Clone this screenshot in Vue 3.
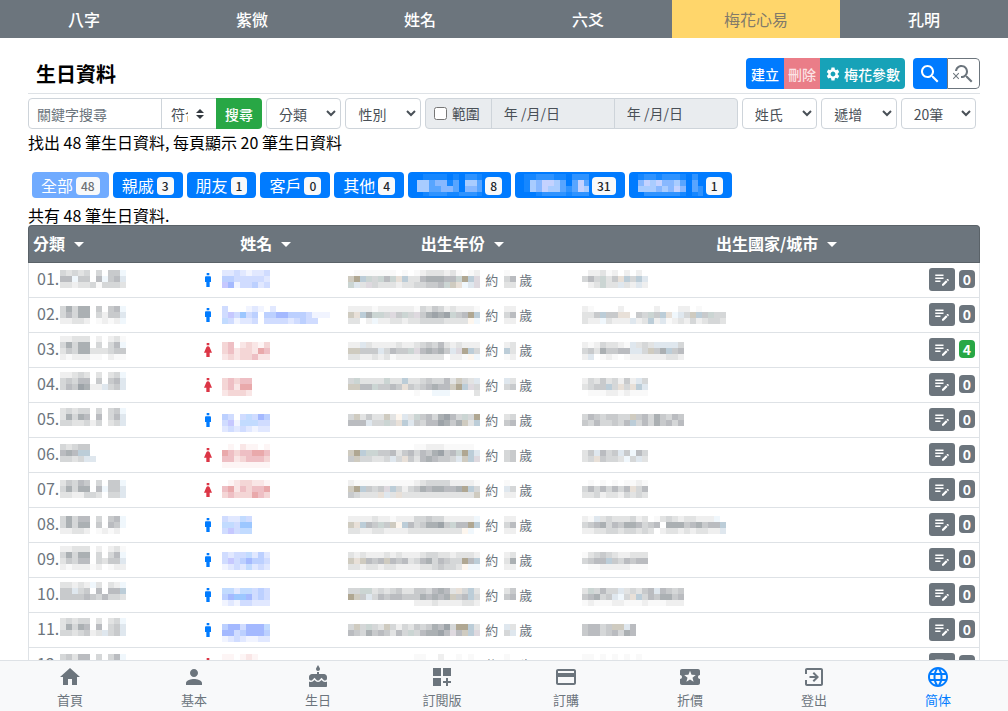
<script setup>
import { h, ref } from 'vue'

const icons = {
  home: 'M10 20v-6h4v6h5v-8h3L12 3 2 12h3v8z',
  person: 'M12 12c2.21 0 4-1.79 4-4s-1.79-4-4-4-4 1.79-4 4 1.79 4 4 4zm0 2c-2.67 0-8 1.34-8 4v2h16v-2c0-2.66-5.33-4-8-4z',
  cake: 'M12 6c1.11 0 2-.9 2-2 0-.38-.1-.73-.29-1.03L12 0l-1.71 2.97c-.19.3-.29.65-.29 1.03 0 1.1.9 2 2 2zm4.6 9.99l-1.07-1.07-1.08 1.07c-1.3 1.3-3.58 1.31-4.89 0l-1.07-1.07-1.09 1.07C6.75 16.64 5.88 17 4.96 17c-.73 0-1.4-.23-1.96-.61V21c0 .55.45 1 1 1h16c.55 0 1-.45 1-1v-4.61c-.56.38-1.23.61-1.96.61-.92 0-1.79-.36-2.44-1.01zM18 9h-5V7h-2v2H6c-1.66 0-3 1.34-3 3v1.54c0 1.08.88 1.96 1.96 1.96.52 0 1.02-.2 1.38-.57l2.14-2.13 2.13 2.13c.74.74 2.03.74 2.77 0l2.14-2.13 2.13 2.13c.37.37.86.57 1.38.57 1.08 0 1.96-.88 1.96-1.96V12C21 10.34 19.66 9 18 9z',
  dashboard: 'M3 3h8v8H3zM13 3h8v8h-8zM3 13h8v8H3zM18 13h-2v3h-3v2h3v3h2v-3h3v-2h-3z',
  card: 'M20 4H4c-1.11 0-1.99.89-1.99 2L2 18c0 1.11.89 2 2 2h16c1.11 0 2-.89 2-2V6c0-1.11-.89-2-2-2zm0 14H4v-6h16v6zm0-10H4V6h16v2z',
  ticket: 'M20 12c0-1.1.9-2 2-2V6c0-1.1-.9-2-2-2H4c-1.1 0-1.99.9-1.99 2v4c1.1 0 1.99.9 1.99 2s-.89 2-2 2v4c0 1.1.9 2 2 2h16c1.1 0 2-.9 2-2v-4c-1.1 0-2-.9-2-2zm-4.42 4.8L12 14.5l-3.58 2.3 1.08-4.12-3.29-2.69 4.24-.25L12 5.8l1.54 3.95 4.24.25-3.29 2.69 1.09 4.11z',
  exit: 'M10.6 15.59L12 17l5-5-5-5-1.4 1.41L13.17 11H7.5v2h5.67zM19 3H5c-1.11 0-2 .9-2 2v4h2V5h14v14H5v-4H3v4c0 1.1.89 2 2 2h14c1.1 0 2-.9 2-2V5c0-1.1-.9-2-2-2z',
  globe: 'M11.99 2C6.47 2 2 6.48 2 12s4.47 10 9.99 10C17.52 22 22 17.52 22 12S17.52 2 11.99 2zm6.93 6h-2.95c-.32-1.25-.78-2.45-1.38-3.56 1.84.63 3.37 1.91 4.33 3.56zM12 4.04c.83 1.2 1.48 2.53 1.91 3.96h-3.82c.43-1.43 1.08-2.76 1.91-3.96zM4.26 14C4.1 13.36 4 12.69 4 12s.1-1.36.26-2h3.38c-.08.66-.14 1.32-.14 2s.06 1.34.14 2H4.26zm.82 2h2.95c.32 1.25.78 2.45 1.38 3.56-1.84-.63-3.37-1.9-4.33-3.56zm2.95-8H5.08c.96-1.66 2.49-2.93 4.33-3.56C8.81 5.55 8.35 6.75 8.03 8zM12 19.96c-.83-1.2-1.48-2.53-1.91-3.96h3.82c-.43 1.43-1.08 2.76-1.91 3.96zM14.34 14H9.66c-.09-.66-.16-1.32-.16-2s.07-1.35.16-2h4.68c.09.65.16 1.32.16 2s-.07 1.34-.16 2zm.25 5.56c.6-1.11 1.06-2.31 1.38-3.56h2.95c-.96 1.65-2.49 2.93-4.33 3.56zM16.36 14c.08-.66.14-1.32.14-2s-.06-1.34-.14-2h3.38c.16.64.26 1.31.26 2s-.1 1.36-.26 2h-3.38z',
  gear: 'M19.14 12.94c.04-.3.06-.61.06-.94 0-.32-.02-.64-.07-.94l2.03-1.58c.18-.14.23-.41.12-.61l-1.92-3.32c-.12-.22-.37-.29-.59-.22l-2.39.96c-.5-.38-1.03-.7-1.62-.94l-.36-2.54c-.04-.24-.24-.41-.48-.41h-3.84c-.24 0-.43.17-.47.41l-.36 2.54c-.59.24-1.13.57-1.62.94l-2.39-.96c-.22-.08-.47 0-.59.22L2.74 8.87c-.12.21-.08.47.12.61l2.03 1.58c-.05.3-.09.63-.09.94s.02.64.07.94l-2.03 1.58c-.18.14-.23.41-.12.61l1.92 3.32c.12.22.37.29.59.22l2.39-.96c.5.38 1.03.7 1.62.94l.36 2.54c.05.24.24.41.48.41h3.84c.24 0 .44-.17.47-.41l.36-2.54c.59-.24 1.13-.56 1.62-.94l2.39.96c.22.08.47 0 .59-.22l1.92-3.32c.12-.22.07-.47-.12-.61l-2.01-1.58zM12 15.6c-1.98 0-3.6-1.62-3.6-3.6s1.62-3.6 3.6-3.6 3.6 1.62 3.6 3.6-1.62 3.6-3.6 3.6z',
  search: 'M15.5 14h-.79l-.28-.27C15.41 12.59 16 11.11 16 9.5 16 5.91 13.09 3 9.5 3S3 5.91 3 9.5 5.91 16 9.5 16c1.61 0 3.09-.59 4.23-1.57l.27.28v.79l5 4.99L20.49 19l-4.99-5zm-6 0C7.01 14 5 11.99 5 9.5S7.01 5 9.5 5 14 7.01 14 9.5 11.99 14 9.5 14z',
  searchOff: 'M15.5 14h-.79l-.28-.27C15.41 12.59 16 11.11 16 9.5 16 5.91 13.09 3 9.5 3 6.08 3 3.28 5.64 3.03 9h2.02C5.3 6.75 7.18 5 9.5 5 11.99 5 14 7.01 14 9.5S11.99 14 9.5 14c-.17 0-.33-.03-.5-.05v2.02c.17.02.33.03.5.03 1.61 0 3.09-.59 4.23-1.57l.27.28v.79l5 4.99L20.49 19zM6.47 10.82L4 13.29l-2.47-2.47-.71.71L3.29 14 .82 16.47l.71.71L4 14.71l2.47 2.47.71-.71L4.71 14l2.47-2.47z',
  note: 'M3 10h11v2H3zM3 8h11V6H3zM3 16h7v-2H3zM18.01 12.87l.71-.71c.39-.39 1.02-.39 1.41 0l.71.71c.39.39.39 1.02 0 1.41l-.71.71zM17.3 13.58l-5.3 5.3V21h2.12l5.3-5.3z',
  man: 'M10 1.500h4v3.500h-4zM15 6.500H9C7.900 6.500 7.500 7.400 7.500 8.500V15h2v7.500h5V15h2V8.500c0-1.100-.400-2-1.500-2z',
  woman: 'M10 1.500h4v3.500h-4zM14.500 8C14 7 13.200 6.500 12 6.500S10 7 9.500 8L6 16h3.500v6.500h5V16H18z',
}

const Icon = (p) =>
  h('svg', { viewBox: '0 0 24 24', width: p.size, height: p.size, fill: 'currentColor', 'aria-hidden': 'true' }, [
    h('path', { d: icons[p.name] }),
  ])
Icon.props = ['name', 'size']

const palettes = {
  gray: {
    1: '#f9f9f9', 2: '#efefef', 3: '#e2e3e3', 4: '#d5d7d8', 5: '#c8cacc', 6: '#babcc0', 7: '#abb0b3', 8: '#9da3a8',
    a: '#fdf6ee', b: '#e8e0d8', c: '#cfcbc0', d: '#b0a792', e: '#f0f7fc', f: '#dfe7ee', g: '#bccdd8', t: '#cbd5d3', p: '#ded9df',
  },
  blue: { 1: '#f1f4ff', 2: '#e1e8ff', 3: '#d0dcff', 4: '#bcd0ff', 5: '#a4b9ff', c: '#c2dbff', d: '#9cc7ff', v: '#c6c8ff' },
  red: { 1: '#fdf5f5', 2: '#f9e6e6', 3: '#f4d6d6', 4: '#eebfc4', 5: '#e9a9ab' },
  label: { 1: '#1687ff', 2: '#2f93ff', 3: '#58a5ff', 4: '#88b8ff', 5: '#a9ccff', 6: '#c4d2ff' },
}

/* Pixelated placeholder for private text: one character per 6px cell. */
const Mosaic = (p) => {
  const y0 = p.dy || 0
  const cells = []
  p.rows.split('/').forEach((row, r) => {
    row.split('').forEach((c, i) => {
      const fill = palettes[p.tone][c]
      if (fill) cells.push(h('rect', { x: i * 6, y: y0 + r * 6, width: 6, height: 6, fill }))
    })
  })
  return h('svg', { width: p.w, height: p.h || 34, 'shape-rendering': 'crispEdges', role: 'img', 'aria-label': '已隱藏' }, cells)
}
Mosaic.props = ['rows', 'tone', 'dy', 'w', 'h']

const sections = ['八字', '紫微', '姓名', '六爻', '梅花心易', '孔明']
const current = ref('梅花心易')

const groups = [
  { name: '全部', n: 48, active: true },
  { name: '親戚', n: 3 },
  { name: '朋友', n: 1 },
  { name: '客戶', n: 0 },
  { name: '其他', n: 4 },
  { hidden: '.1111.1.221/5534413.553/5533443.443/.1222112221', n: 8 },
  { hidden: '1122211.222/1546653.363/15465532365/..122221222', n: 31 },
  { hidden: '12212221.2./46564453.3./55545464.32/.2222221.12', n: 1 },
]

/* c: category, n: name, b: birth date, a: age, p: place; each is [top offset, cell rows]. */
const rows = [
  {
    g: 'm', k: 0,
    c: [7, '43434.4.55e/66e55.6e56f/33233414443'],
    n: [7, '22321223/44333332/v5133423'],
    b: [7, '.1111111.1.12333231.12/cdgt4t6tbg33677766tdgp/tf3p433323344556tcbefp'],
    a: [7, '1./46/33'],
    p: [7, '.22312.2.2./464t35bg4gf/.23t33f32f2'],
  },
  {
    g: 'm', k: 0,
    c: [8, '47477.5.56e/46477.4255f/22332.1212e'],
    n: [8, '3...121.2/3v3d34.44554443111/c31223.333323433'],
    b: [8, '2222122222214354232221/cbg7tt4p5t4p57878t56dg4/33.2e223323344443333ae'],
    a: [8, '22/46/22'],
    p: [8, '21....2.....2...22.1../335g55bb.54t5gbef4cg5t44/322e3222f23g2f1232423443'],
  },
  {
    g: 'f', k: 4,
    c: [3, '22333.2.231/47477.4.46e/35477333455/2122211.211'],
    n: [9, '34.23213/34233254/23233422'],
    b: [9, '22f3222232234546323222/cc555f4655tp67675fpdg4p/3322323122223333.221ae'],
    a: [9, '23/g3/12'],
    p: [9, '21243321f343ffff4/45375566ff4c57g56/2f.121.1222222332'],
  },
  {
    g: 'f', k: 0,
    c: [4, '22343.3.34e/45466.5.56f/4658722f45f'],
    n: [10, '34344/34255/23332'],
    b: [10, '4t3333t33g33454463c43f/cc66t5565b5456766cdgp4/...........1..eee....3'],
    a: [10, 'f3/45'],
    p: [10, '243534252f4/3455g4b4bgf/.1112212111'],
  },
  {
    g: 'm', k: 0,
    c: [5, '34344.4.45e/37476.6.46f/4433424.34f'],
    n: [11, '43e3c354/3v1ccc33/23232122'],
    b: [11, '4c3533c3af3t5647864t4dg/666f44t4bgf54668757c3gp'],
    a: [11, '34/56'],
    p: [11, '46545544c56475465/54644546g46475646'],
  },
  {
    g: 'f', k: 0,
    c: [6, '43455/676gg/4434ff'],
    n: [6, '.1.211.1/54344554/44234443/11111111'],
    b: [6, '...........1122211111./cdgtt5563564657856tdgfp/5c44334f4b53676554fcgp'],
    a: [12, '45/45'],
    p: [12, '35f645f5e64/34b5443e4f3'],
  },
  {
    g: 'f', k: 0,
    c: [7, '35465.4.55e/47477.6e55f/3322443.44f'],
    n: [7, '.1233221/45243445/34333543'],
    b: [7, '2111111111123444422221/cdg545pg42457677667dg4p/54333bf3b333333333333ce'],
    a: [7, '1./f4/22'],
    p: [7, '.1.1.1.1121/46464646b46/33423324343'],
  },
  {
    g: 'm', k: 0,
    c: [8, '47466.4.56e/47477.5.65e/22332.1212.'],
    n: [8, '322c3/cc3dd/3v3cc'],
    b: [8, '222232212224454422222e/cbg65t5cag6457785t66dg4/3322332222333333333ae'],
    a: [8, '22/46/22'],
    p: [8, '21f34333423.1343233222e./4567465776456.777567566g/223344344343.2332323322f'],
  },
  {
    g: 'm', k: 0,
    c: [3, '22333.2.231/47477.4.46e/35466.4355f/2122212.122'],
    n: [9, '3233c242/3v345443/1232c232'],
    b: [9, '3232223232223443323332/cbc656c656346746544d6g4/3323323322223345443aee'],
    a: [9, '23/37/22'],
    p: [9, '13454322333/4566g546566/.1122222111'],
  },
  {
    g: 'm', k: 0,
    c: [4, '33232e3.32e/55f45.6.66g/55556546443'],
    n: [10, 'cc2cc343/45dd5343/12133222'],
    b: [10, '44tt34345335546763b4g3/dc5f4656655576767c56g44/...........22232222332'],
    a: [10, '35/56'],
    p: [10, '3t4644f34356f6545/56745fe4bg4657756/12111221112111222'],
  },
  {
    g: 'm', k: 0,
    c: [5, '34344.3.34e/37476.6.45f/4434523f45f'],
    n: [11, '4553555c/55345554/12321122'],
    b: [11, '4c4t43c42435457684ddg3f/6547565364t467786p6cgp'],
    a: [11, 'f3/4f'],
    p: [11, '56645ccf6/566456476'],
  },
  {
    g: 'f', k: 0,
    c: [6, '45366.4.46e/33344.3.33e'],
    n: [6, '11.121/2223'],
    b: [6, '...........11..2..1.1.'],
    a: [6, '1.'],
    p: [6, '11.1.1.1.1/22222222'],
  },
].map((r, i) => ({ ...r, no: String(i + 1).padStart(2, '0') + '.' }))

const columns = ['分類', '姓名', '出生年份', '出生國家/城市']

const tabs = [
  ['home', '首頁'],
  ['person', '基本'],
  ['cake', '生日'],
  ['dashboard', '訂閱版'],
  ['card', '訂購'],
  ['ticket', '折價'],
  ['exit', '登出'],
  ['globe', '简体'],
]
</script>

<template>
  <div class="app">
    <nav class="sections">
      <button v-for="s in sections" :key="s" type="button" :class="{ on: s === current }" @click="current = s">{{ s }}</button>
    </nav>

    <main>
      <header class="toolbar">
        <h1>生日資料</h1>
        <div class="btn-group">
          <button type="button" class="blue">建立</button>
          <button type="button" class="pink">刪除</button>
          <button type="button" class="teal"><Icon name="gear" :size="16" />梅花參數</button>
        </div>
        <div class="btn-group">
          <button type="button" class="blue square" aria-label="開啟搜尋"><Icon name="search" :size="24" /></button>
          <button type="button" class="outline square" aria-label="清除搜尋"><Icon name="searchOff" :size="24" /></button>
        </div>
      </header>

      <form class="filters" @submit.prevent>
        <div class="keyword">
          <input type="text" placeholder="關鍵字搜尋" aria-label="關鍵字搜尋" />
          <select class="match" aria-label="比對方式"><option>符合</option></select>
          <button type="submit">搜尋</button>
        </div>
        <select class="pick" aria-label="分類"><option>分類</option></select>
        <select class="pick" aria-label="性別"><option>性別</option></select>
        <div class="range">
          <label><input type="checkbox" />範圍</label>
          <input type="text" value="年 /月/日" aria-label="開始日期" disabled />
          <input type="text" value="年 /月/日" aria-label="結束日期" disabled />
        </div>
        <select class="pick" aria-label="排序欄位"><option>姓氏</option></select>
        <select class="pick" aria-label="排序方向"><option>遞增</option></select>
        <select class="pick" aria-label="每頁筆數"><option>20筆</option></select>
      </form>

      <p class="found">找出 48 筆生日資料, 每頁顯示 20 筆生日資料</p>

      <div class="chips">
        <button v-for="(g, i) in groups" :key="i" type="button" :class="{ active: g.active }">
          <Mosaic v-if="g.hidden" :rows="g.hidden" tone="label" :dy="0" :w="65" :h="22" />
          <span v-else>{{ g.name }}</span>
          <span class="count">{{ g.n }}</span>
        </button>
      </div>

      <p class="total">共有 48 筆生日資料.</p>

      <table>
        <colgroup>
          <col class="c1" /><col class="c2" /><col class="c3" /><col /><col class="c5" />
        </colgroup>
        <thead>
          <tr>
            <th v-for="(c, i) in columns" :key="c" :colspan="i === 3 ? 2 : 1" scope="col">
              <button type="button">{{ c }}<i class="caret"></i></button>
            </th>
          </tr>
        </thead>
        <tbody>
          <tr v-for="r in rows" :key="r.no">
            <td>
              <div class="cell first">
                <span class="no">{{ r.no }}</span>
                <Mosaic :rows="r.c[1]" tone="gray" :dy="r.c[0]" :w="66" />
              </div>
            </td>
            <td>
              <div class="cell name" :class="r.g">
                <Icon :name="r.g === 'm' ? 'man' : 'woman'" :size="16" />
                <Mosaic :rows="r.n[1]" :tone="r.g === 'm' ? 'blue' : 'red'" :dy="r.n[0]" :w="114" />
              </div>
            </td>
            <td>
              <div class="cell born">
                <Mosaic :rows="r.b[1]" tone="gray" :dy="r.b[0]" :w="132" />
                <span class="about">約</span>
                <Mosaic :rows="r.a[1]" tone="gray" :dy="r.a[0]" :w="12" />
                <span class="age">歲</span>
              </div>
            </td>
            <td>
              <div class="cell place"><Mosaic :rows="r.p[1]" tone="gray" :dy="r.p[0]" :w="144" /></div>
            </td>
            <td>
              <div class="cell tools">
                <button type="button" aria-label="編輯"><Icon name="note" :size="18" /></button>
                <span class="badge" :class="{ some: r.k }">{{ r.k }}</span>
              </div>
            </td>
          </tr>
        </tbody>
      </table>
    </main>

    <nav class="tabs">
      <a v-for="t in tabs" :key="t[0]" href="#" :class="{ lang: t[0] === 'globe' }">
        <Icon :name="t[0]" :size="24" />
        <span>{{ t[1] }}</span>
      </a>
    </nav>
  </div>
</template>

<style>
body {
  margin: 0;
  background: #fff;
}
</style>

<style scoped>
.app {
  display: flex;
  flex-direction: column;
  height: 100vh;
  font: 16px/24px "Noto Sans CJK TC", "Noto Sans CJK SC", sans-serif;
  color: #000;
}
.app *, .app *::before {
  box-sizing: border-box;
}
button, input, select {
  font-family: inherit;
  margin: 0;
}
button {
  border: 0;
  padding: 0;
  cursor: pointer;
}
svg {
  flex: none;
  display: block;
}

.sections {
  flex: none;
  display: grid;
  grid-template-columns: repeat(6, 1fr);
  background: #6c757d;
}
.sections button {
  height: 38px;
  background: none;
  color: #fff;
  font-size: 16px;
  font-weight: 500;
}
.sections button.on {
  background: #ffd66b;
  color: #827a6a;
  font-weight: 400;
}

main {
  flex: 1;
  min-height: 0;
  overflow-y: auto;
  scrollbar-width: none;
  padding: 0 28px;
}

.toolbar {
  display: flex;
  align-items: center;
  gap: 8px;
  padding: 20px 0 4px;
  border-bottom: 1px solid #dee2e6;
}
h1 {
  flex: 1;
  margin: 0;
  padding-left: 8px;
  font-size: 20px;
  line-height: 31px;
  font-weight: 700;
}
.btn-group {
  display: flex;
  border-radius: 4px;
  overflow: hidden;
}
.btn-group button {
  display: flex;
  align-items: center;
  gap: 3px;
  height: 31px;
  padding: 0 5px;
  color: #fff;
  font-size: 14px;
  font-weight: 500;
}
.btn-group .blue { background: #007bff; }
.btn-group .pink { background: #ea7d88; padding: 0 4px; color: #fbe3e5; }
.btn-group .teal { background: #17a2b8; }
.btn-group .square {
  width: 34px;
  padding: 0;
  justify-content: center;
}
.btn-group .outline {
  width: 33px;
  background: #fff;
  color: #6c757d;
  border: 1px solid #6c757d;
  border-radius: 0 4px 4px 0;
}

.filters {
  display: flex;
  gap: 4px;
  margin-top: 4px;
  padding-right: 4px;
}
.filters input[type="text"], .filters select {
  height: 31px;
  border: 1px solid #ced4da;
  background-color: #fff;
  color: #495057;
  font-size: 14px;
}
.filters ::placeholder {
  color: #6c757d;
  opacity: 1;
}
.keyword {
  display: flex;
  width: 234px;
}
.keyword input {
  flex: 1;
  min-width: 0;
  padding: 0 8px;
  border-radius: 4px 0 0 4px;
}
.keyword button {
  width: 46px;
  border-radius: 0 4px 4px 0;
  background: #28a745;
  color: #fff;
  font-size: 14px;
  font-weight: 500;
}
.filters select {
  appearance: none;
  background-repeat: no-repeat;
}
.match {
  width: 55px;
  margin-left: -1px;
  padding: 0 28px 0 9px;
  border-right: 0 !important;
  background-image: url("data:image/svg+xml,%3Csvg xmlns='http://www.w3.org/2000/svg' width='8' height='10' viewBox='0 0 4 5'%3E%3Cpath fill='%23343a40' d='M2 0L0 2h4zm0 5L0 3h4z'/%3E%3C/svg%3E");
  background-position: right 12px center;
}
.pick {
  flex: 1;
  min-width: 0;
  padding: 0 20px 0 12px;
  border-radius: 4px;
  background-image: url("data:image/svg+xml,%3Csvg xmlns='http://www.w3.org/2000/svg' width='10' height='7' viewBox='0 0 10 7'%3E%3Cpath fill='none' stroke='%23495057' stroke-width='2' d='M1 1l4 4 4-4'/%3E%3C/svg%3E");
  background-position: right 4px center;
}
.range {
  display: flex;
  width: 313px;
}
.range label {
  display: flex;
  align-items: center;
  gap: 5px;
  width: 67px;
  padding: 0 0 1px 8px;
  border: 1px solid #ced4da;
  border-radius: 4px 0 0 4px;
  background: #e9ecef;
  color: #495057;
  font-size: 14px;
}
.range label input {
  width: 13px;
  height: 13px;
}
.range > input {
  flex: 1;
  min-width: 0;
  margin-left: -1px;
  padding: 0 12px 2px;
}
.range > input[type="text"] {
  background: #e9ecef;
}
.range > input:last-child {
  border-radius: 0 4px 4px 0;
}

p {
  margin: 0;
}
.found {
  margin-top: 1px;
}
.chips {
  display: flex;
  gap: 4px;
  margin-top: 18px;
  padding-left: 4px;
}
.chips button {
  display: flex;
  align-items: center;
  gap: 3px;
  height: 26px;
  padding: 0 9px;
  border-radius: 4px;
  background: #007bff;
  color: #fff;
  font-size: 16px;
  line-height: 24px;
}
.chips .active {
  background: #70abff;
}
.count {
  height: 18px;
  margin-top: 2px;
  padding: 0 5px;
  border-radius: 4px;
  background: #f8f9fa;
  color: #212529;
  font-size: 12px;
  line-height: 18px;
  font-weight: 500;
}
.active .count {
  color: #6c6f73;
}
.total {
  margin-top: 7px;
  line-height: 20px;
}

table {
  width: 100%;
  table-layout: fixed;
  border-collapse: separate;
  border-spacing: 0;
}
.c1 { width: 18%; }
.c2 { width: 14.8%; }
.c3 { width: 24.6%; }
.c5 { width: 60px; }
th {
  height: 38px;
  padding: 0 0 2px;
  border: 1px solid #5a6268;
  border-width: 1px 0;
  background: #6c757d;
}
th:first-child {
  border-left-width: 1px;
  border-radius: 4px 0 0 0;
  padding-left: 4px;
  text-align: left;
}
th:nth-child(2) { padding-right: 8px; }
th:nth-child(3) { padding-left: 10px; }
th:last-child {
  border-right-width: 1px;
  border-radius: 0 4px 0 0;
}
th button {
  background: none;
  color: #fff;
  font-size: 16px;
  line-height: 24px;
  font-weight: 700;
}
.caret {
  display: inline-block;
  margin-left: 9px;
  vertical-align: 3px;
  border: 5px solid transparent;
  border-top-color: #fff;
  border-bottom: 0;
}
td {
  padding: 0;
  border-bottom: 1px solid #dee2e6;
  color: #6c757d;
}
td:first-child { border-left: 1px solid #dee2e6; }
td:last-child { border-right: 1px solid #dee2e6; }
.cell {
  display: flex;
  align-items: center;
  height: 34px;
  font-size: 13px;
}
.first { padding-left: 8px; font-size: 16px; }
.no { width: 23px; padding-bottom: 4px; }
.name { gap: 6px; padding-left: 1px; }
.m { color: #007bff; }
.f { color: #dc3545; }
.born { padding-left: 8px; }
.about { margin: 0 6px 0 5px; }
.age { margin-left: 3px; }
.place { padding-left: 8px; }
.tools {
  justify-content: flex-end;
  gap: 4px;
  padding: 0 4px 2px 0;
}
.tools button {
  display: flex;
  align-items: center;
  justify-content: center;
  width: 26px;
  height: 23px;
  border-radius: 3px;
  background: #6c757d;
  color: #fff;
}
.badge {
  width: 16px;
  height: 18px;
  border-radius: 4px;
  background: #6c757d;
  color: #fff;
  font-size: 14px;
  line-height: 18px;
  font-weight: 700;
  text-align: center;
}
.badge.some { background: #28a745; }

.tabs {
  flex: none;
  display: grid;
  grid-template-columns: repeat(8, 1fr);
  height: 51px;
  padding: 0 8px;
  border-top: 1px solid #dee2e6;
  background: #f8f9fa;
}
.tabs a {
  display: flex;
  flex-direction: column;
  align-items: center;
  padding-top: 4px;
  color: #6c757d;
  font-size: 13px;
  line-height: 22px;
  text-decoration: none;
}
.tabs .lang { color: #007bff; }
</style>
